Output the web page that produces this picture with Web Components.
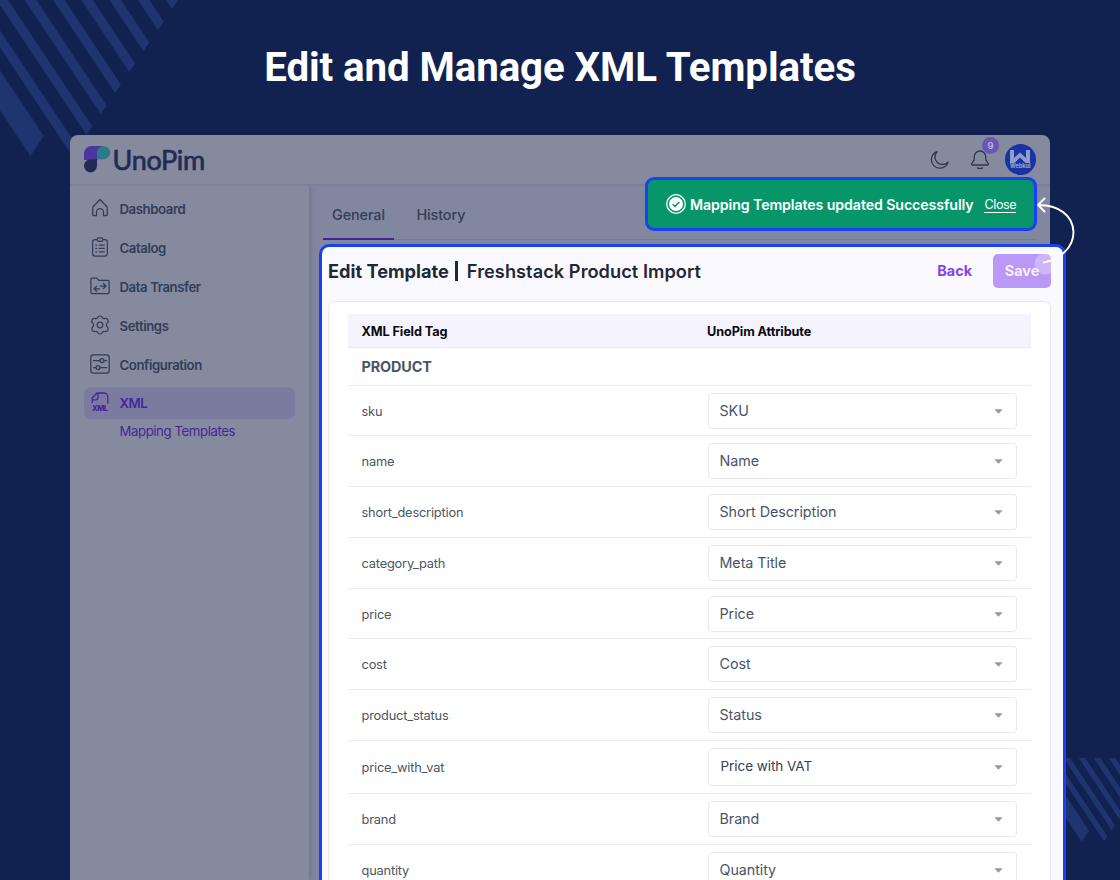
<!DOCTYPE html>
<html lang="en">
<head>
<meta charset="utf-8">
<title>Edit and Manage XML Templates</title>
<style>
    html, body {
        margin: 0;
        height: 880px;
        overflow: hidden;
        background: #112150;
        font-family: Inter, "Liberation Sans", sans-serif;
    }
</style>
</head>
<body>
<promo-page heading="Edit and Manage XML Templates">
    <app-window slot="window"></app-window>
    <edit-panel slot="overlay"></edit-panel>
    <success-toast slot="overlay">Mapping Templates updated Successfully</success-toast>
    <click-arrow slot="overlay"></click-arrow>
</promo-page>

<script>
const ICONS = {
    home: '<path d="M2.700 9.200 10 1.500l7.300 7.700v7.600a.9.9 0 0 1-.9.9h-2.900v-3.500a3.500 3.500 0 0 0-7 0v3.500H3.600a.9.9 0 0 1-.9-.9z"/>',
    catalog: '<path d="M7 2.6H5a2.4 2.4 0 0 0-2.4 2.4v11.6A2.4 2.4 0 0 0 5 19h10a2.4 2.4 0 0 0 2.4-2.4V5A2.4 2.4 0 0 0 15 2.6h-2"/><path d="M8 .9h4l1 1.7-1 1.7H8L7 2.6zM9.3 8h5M9.3 11.4h5M9.3 14.8h5M5.8 8h1M5.8 11.4h1M5.8 14.8h1"/>',
    transfer: '<path d="M.9 16.5V3.4A1.2 1.2 0 0 1 2.1 2.2h4.6l2 2.2h9.2a1.2 1.2 0 0 1 1.2 1.2v10.9a1.2 1.2 0 0 1-1.2 1.2H2.1a1.2 1.2 0 0 1-1.2-1.2z"/><path d="M9.5 12.8H4m2.6-2.5L4 12.8l2.6 2.5M10.2 10H16m-2.6-2.5L16 10l-2.6 2.5"/>',
    settings: '<path d="M7.6 2.6Q8.200 1 10 1t2.400 1.600q.9 1.400 2.400.9 2.200-.4 3 1.300 1 1.700-.3 3.100-1.200 1.100-1.200 2.100t1.200 2.100q1.300 1.400.3 3.100-.8 1.700-3 1.300-1.500-.5-2.400.9Q11.800 19 10 19t-2.400-1.600q-.9-1.400-2.400-.9-2.200.4-3-1.300-1-1.700.3-3.100Q3.700 11 3.700 10T2.500 7.900q-1.300-1.400-.3-3.100.8-1.700 3-1.300 1.500.5 2.400-.9z"/><circle cx="10" cy="10" r="2.800"/>',
    config: '<rect x=".8" y=".8" width="18.4" height="18.4" rx="2.6"/><circle cx="12" cy="6.5" r="2"/><circle cx="8" cy="13.5" r="2"/><path d="M3.5 6.5H10M14 6.5h2.6M3.5 13.5H6M10 13.5h6.6"/>'
};

function navIcon(name) {
    return `<svg viewBox="0 0 20 20" width="20" height="20" fill="none" stroke="currentColor" stroke-width="1.25" stroke-linecap="round" stroke-linejoin="round">${ICONS[name]}</svg>`;
}

/* Diagonal stripe decoration, one polygon per stripe */
function stripes(count, x, y, w, h, stepX, stepY) {
    let out = '';
    for (let i = 0; i < count; i++) {
        const ax = x + stepX * i, ay = y - stepY * i;
        out += `<polygon points="${ax},${ay} ${ax + w},${ay - h} ${ax + w - 140},${ay - h - 210} ${ax - 140},${ay - 210}"/>`;
    }
    return out;
}

class PromoPage extends HTMLElement {
    connectedCallback() {
        this.attachShadow({ mode: 'open' });
        this.shadowRoot.innerHTML = `
            <style>
                :host {
                    display: block;
                    position: relative;
                    height: 880px;
                    overflow: hidden;
                }

                svg {
                    position: absolute;
                    fill: #20356f;
                }

                .top { left: 0; top: 0; }
                .bottom { right: 0; top: 758px; }

                main {
                    position: relative;
                    display: flex;
                    flex-direction: column;
                    align-items: center;
                }

                h1 {
                    margin: 0;
                    height: 135px;
                    font: 700 40.3px/135px Roboto, sans-serif;
                    letter-spacing: -0.1px;
                    color: #fff;
                    white-space: nowrap;
                }
            </style>
            <svg class="top" width="240" height="190">
                <polygon points="30.5,156 43.8,136 -56,-14 -73.500,0"/>
                ${stripes(8, 72.3, 156, 5.8, 8.6, 14.25, 21)}
            </svg>
            <svg class="bottom" width="60" height="100" viewBox="1060 758 60 100">
                <polygon points="1081.7,841.7 1089,830.7 1030,742 1015,741.700"/>
                ${stripes(6, 1104, 841.3, 3.3, 5, 7.6, 11.2)}
            </svg>
            <main>
                <h1>${this.getAttribute('heading')}</h1>
                <slot name="window"></slot>
            </main>
            <slot name="overlay"></slot>
        `;
    }
}

class AppWindow extends HTMLElement {
    connectedCallback() {
        this.attachShadow({ mode: 'open' });
        this.shadowRoot.innerHTML = `
            <style>
                :host {
                    display: flex;
                    flex-direction: column;
                    width: 980px;
                    height: 745px;
                    border-radius: 8px 8px 0 0;
                    background: #858a9e;
                    overflow: hidden;
                }

                header {
                    display: flex;
                    align-items: center;
                    padding: 0 14px;
                    border-bottom: 2px solid #7b8298;
                    box-sizing: border-box;
                    height: 51px;
                }

                .actions {
                    display: flex;
                    align-items: center;
                    margin-left: auto;
                    color: #2c3854;
                }

                .bell {
                    position: relative;
                    display: flex;
                    margin: 0 13.5px 0 19px;
                }

                .badge {
                    position: absolute;
                    left: 13px;
                    top: -11.5px;
                    width: 17px;
                    height: 17px;
                    border-radius: 50%;
                    background: #6a57b4;
                    color: #b9b6d6;
                    font-size: 9.5px;
                    font-weight: 600;
                    line-height: 17px;
                    text-align: center;
                }

                .avatar {
                    display: flex;
                    flex-direction: column;
                    align-items: center;
                    width: 31.5px;
                    height: 31.5px;
                    border-radius: 50%;
                    background: #1734a4;
                    color: #949fca;
                    font-size: 5.5px;
                    font-weight: 800;
                    line-height: 7px;
                }

                .avatar svg { margin-top: 6px; }

                .body {
                    display: flex;
                    flex: 1;
                }

                side-nav { z-index: 1; }

                .main {
                    flex: 1;
                    background: #8287a0;
                    padding: 0 15px 0 14px;
                }

                .tabs {
                    display: flex;
                    height: 53px;
                    border-bottom: 1px solid #747a92;
                    font-size: 14.4px;
                    font-weight: 500;
                    letter-spacing: -0.1px;
                    color: #333e58;
                    line-height: 58px;
                }

                .tabs span {
                    box-sizing: border-box;
                    height: 54px;
                    padding: 0 9px;
                    margin-right: 13.5px;
                }

                .tabs .active { border-bottom: 2px solid #42249b; }
            </style>
            <header>
                <uno-logo></uno-logo>
                <div class="actions">
                    <svg width="20" height="20" viewBox="0 0 20 20" fill="none" stroke="currentColor" stroke-width="1.3" stroke-linejoin="round"><path d="M7 1.7A8.5 8.5 0 1 0 18.1 12.1 7.6 7.6 0 0 1 7 1.7z"/></svg>
                    <div class="bell">
                        <svg width="22" height="22" viewBox="0 0 22 22" fill="none" stroke="currentColor" stroke-width="1.3" stroke-linecap="round" stroke-linejoin="round"><path d="M11 2a5.8 5.8 0 0 0-5.8 5.8v3.1L2.7 14.5q-.5 1.5 1 1.5h14.6q1.5 0 1-1.5l-2.5-3.6V7.8A5.8 5.8 0 0 0 11 2zM8.5 18.9q2.5 1.4 5 0"/></svg>
                        <span class="badge">9</span>
                    </div>
                    <div class="avatar">
                        <svg width="20" height="13" viewBox="0 0 20 13" fill="#929cca"><path d="M0 0h4v8L10 2.500 16 8V0h4v13h-4.500L10 7.500 4.500 13H0z"/></svg>
                        Webkul
                    </div>
                </div>
            </header>
            <div class="body">
                <side-nav></side-nav>
                <div class="main">
                    <div class="tabs"><span class="active">General</span><span>History</span></div>
                </div>
            </div>
        `;
    }
}

class UnoLogo extends HTMLElement {
    connectedCallback() {
        this.attachShadow({ mode: 'open' });
        this.shadowRoot.innerHTML = `
            <style>
                :host {
                    display: flex;
                    align-items: center;
                    gap: 2.5px;
                    color: #232b54;
                }

                svg { display: block; }

                span {
                    padding-top: 1px;
                    font: 400 27px/30px Lato, sans-serif;
                    letter-spacing: -0.3px;
                    -webkit-text-stroke: 0.7px #232b54;
                }
            </style>
            <svg width="26" height="27" viewBox="0 0 26 27">
                <path d="M7.500 0H20v7L13 14H0V7.500A7.500 7.500 0 0 1 7.500 0z" fill="#4a369d"/>
                <path d="M19.500 0a6.500 6.500 0 1 1 0 13.200H13V6.600A6.500 6.500 0 0 1 19.500 0z" fill="#2b7a87"/>
                <path d="M6.500 13.200H13V20a6.500 6.500 0 1 1-13 0 6.600 6.600 0 0 1 6.500-6.800z" fill="#232b54"/>
            </svg>
            <span>UnoPim</span>
        `;
    }
}

class SideNav extends HTMLElement {
    connectedCallback() {
        const items = [['home', 'Dashboard'], ['catalog', 'Catalog'], ['transfer', 'Data Transfer'], ['settings', 'Settings'], ['config', 'Configuration']];
        this.attachShadow({ mode: 'open' });
        this.shadowRoot.innerHTML = `
            <style>
                :host {
                    display: flex;
                    flex-direction: column;
                    gap: 7px;
                    box-sizing: border-box;
                    width: 239px;
                    padding: 7px 14px 0 14px;
                    background: #858a9e;
                    box-shadow: 1px 0 6px #6a7089;
                    clip-path: inset(0 -8px 0 0);
                    color: #323d58;
                    font-size: 13.2px;
                    font-weight: 600;
                    letter-spacing: -0.41px;
                }

                .item {
                    display: flex;
                    align-items: center;
                    gap: 9.5px;
                    height: 32px;
                    padding-left: 6px;
                    border-radius: 7px;
                }

                .item svg {
                    position: relative;
                    top: -1px;
                    overflow: visible;
                }

                .active {
                    margin-top: -.6px;
                    background: #7a7b9f;
                    color: #43269c;
                }

                .sub {
                    margin-top: -7.5px;
                    padding-left: 35.5px;
                    color: #43269c;
                    font-weight: 400;
                    line-height: 24px;
                }
            </style>
            ${items.map(([icon, label]) => `<div class="item">${navIcon(icon)}<span>${label}</span></div>`).join('')}
            <div class="item active">
                <svg width="20" height="20" viewBox="0 0 20 20" fill="none" stroke="currentColor" stroke-width="1.3" stroke-linejoin="round">
                    <path d="M2.200 11V6L7 1h6.800a4 4 0 0 1 4 4v6.500M2.200 7.800h3.600a2.200 2.200 0 0 0 2.200-2.200V1"/>
                    <text x="2" y="19.400" font-size="7.600" font-weight="800" letter-spacing="0" fill="currentColor" stroke="none" textLength="16">XML</text>
                </svg>
                <span>XML</span>
            </div>
            <div class="sub">Mapping Templates</div>
        `;
    }
}

class SuccessToast extends HTMLElement {
    connectedCallback() {
        this.attachShadow({ mode: 'open' });
        this.shadowRoot.innerHTML = `
            <style>
                :host {
                    position: absolute;
                    left: 644.5px;
                    top: 177px;
                    box-sizing: border-box;
                    width: 392.5px;
                    height: 54px;
                    display: flex;
                    align-items: center;
                    padding: 0 0 0 18.5px;
                    border: 3px solid #1a40f5;
                    border-radius: 9px;
                    background: #07966a;
                    color: #fff;
                    white-space: nowrap;
                }

                .text {
                    margin-left: 4px;
                    font-size: 14.2px;
                    letter-spacing: -0.1px;
                    font-weight: 600;
                }

                a {
                    margin: 1px 0 0 11px;
                    font-size: 12.6px;
                    letter-spacing: -0.4px;
                    line-height: 15px;
                    border-bottom: 1px solid #fff;
                }
            </style>
            <svg width="20" height="20" viewBox="0 0 20 20"><circle cx="10" cy="10" r="9.300" fill="none" stroke="#fff" stroke-width="1.300"/><circle cx="10" cy="10" r="7" fill="#fff"/><path d="m6.700 10.200 2.300 2.200 4.400-4.400" fill="none" stroke="#07966a" stroke-width="1.500"/></svg>
            <span class="text"><slot></slot></span>
            <a>Close</a>
        `;
    }
}

class ClickArrow extends HTMLElement {
    connectedCallback() {
        this.attachShadow({ mode: 'open' });
        this.shadowRoot.innerHTML = `
            <style>
                :host {
                    position: absolute;
                    left: 1020px;
                    top: 190px;
                }

                svg { display: block; }
            </style>
            <svg width="60" height="90" viewBox="1020 190 60 90" fill="none" stroke="#fff" stroke-width="1.900" stroke-linecap="round" stroke-linejoin="round">
                <circle cx="1045" cy="264" r="10.500" fill="#fff" fill-opacity=".3" stroke="none"/>
                <path d="M1044 262.500C1060 259 1073.500 248 1073.500 232 1073 215 1058 205 1038.500 205M1044.500 198.500l-6.500 6.500 6.500 6.500"/>
            </svg>
        `;
    }
}

class EditPanel extends HTMLElement {
    connectedCallback() {
        // field, attribute, row height, select height
        const rows = [
            ['sku', 'SKU', 50, 36],
            ['name', 'Name', 51, 36],
            ['short_description', 'Short Description', 51, 36],
            ['category_path', 'Meta Title', 51, 36],
            ['price', 'Price', 50, 36],
            ['cost', 'Cost', 51, 36],
            ['product_status', 'Status', 51, 36],
            ['price_with_vat', 'Price with VAT', 53, 38],
            ['brand', 'Brand', 51, 36],
            ['quantity', 'Quantity', 51, 36]
        ];
        this.attachShadow({ mode: 'open' });
        this.shadowRoot.innerHTML = `
            <style>
                :host {
                    position: absolute;
                    left: 319px;
                    top: 243.5px;
                    box-sizing: border-box;
                    width: 747px;
                    height: 660px;
                    border: 3px solid #1a40f5;
                    border-radius: 10px;
                    background: #faf9ff;
                    padding: 0 12px 0 6px;
                }

                header {
                    display: flex;
                    align-items: center;
                    height: 48px;
                    margin-bottom: 6.5px;
                    color: #1f2937;
                    font-size: 18.2px;
                    font-weight: 700;
                    white-space: nowrap;
                }

                .bar {
                    width: 2.5px;
                    height: 20px;
                    margin: 0 9px 0 6.5px;
                    background: #1f2937;
                }

                .name {
                    font-weight: 600;
                    letter-spacing: 0.05px;
                }

                .back {
                    margin-left: auto;
                    margin-right: 21px;
                    font-size: 14.4px;
                    color: #8145ea;
                }

                .save {
                    width: 58px;
                    height: 34px;
                    border-radius: 5px;
                    background: #b998f6;
                    color: #f6f0ff;
                    font-size: 14.4px;
                    line-height: 34px;
                    text-align: center;
                }

                .card {
                    border: 1px solid #e7e7ee;
                    border-radius: 7px;
                    background: #fff;
                    padding: 12px 19px 0;
                }

                .head, .section {
                    display: grid;
                    grid-template-columns: 345.5px 1fr;
                    align-items: center;
                    height: 33px;
                    padding-left: 13.5px;
                    border-bottom: 1px solid #e9e9ee;
                    background: #f5f3ff;
                    color: #09090f;
                    font-size: 12.7px;
                    font-weight: 700;
                    letter-spacing: -0.1px;
                }

                .head span { padding-top: 1px; }

                .section {
                    height: 37px;
                    background: #fff;
                    color: #4b5563;
                    font-size: 14.4px;
                }
            </style>
            <header>
                <span>Edit Template</span><i class="bar"></i><span class="name">Freshstack Product Import</span>
                <span class="back">Back</span>
                <span class="save">Save</span>
            </header>
            <div class="card">
                <div class="head"><span>XML Field Tag</span><span>UnoPim Attribute</span></div>
                <div class="section">PRODUCT</div>
                ${rows.map(([field, attr, h, sh]) => `<mapping-row field="${field}" style="--row: ${h}px; --select: ${sh}px${field === 'price_with_vat' ? '; --text: 13.5px; --ink: #334155; --indent: 12px' : ''}">${attr}</mapping-row>`).join('')}
            </div>
        `;
    }
}

class MappingRow extends HTMLElement {
    connectedCallback() {
        this.attachShadow({ mode: 'open' });
        this.shadowRoot.innerHTML = `
            <style>
                :host {
                    display: grid;
                    grid-template-columns: 346px 309.5px;
                    box-sizing: border-box;
                    height: var(--row);
                    padding: 7px 0 0 13.5px;
                    border-bottom: 1px solid #e9e9eb;
                }

                .field {
                    line-height: calc(var(--select) + 2px);
                    font-size: 12.8px;
                    letter-spacing: -0.18px;
                    color: #4b5563;
                }

                .select {
                    display: flex;
                    align-items: center;
                    justify-content: space-between;
                    box-sizing: border-box;
                    height: var(--select);
                    padding: 0 13.5px 0 var(--indent, 11px);
                    border: 1px solid #e8e8ec;
                    border-radius: 4px;
                    color: var(--ink, #475569);
                    font-size: var(--text, 14.3px);
                    letter-spacing: -0.05px;
                }

                .value { padding-bottom: 2px; }
            </style>
            <span class="field">${this.getAttribute('field')}</span>
            <div class="select">
                <span class="value"><slot></slot></span>
                <svg width="9" height="5" viewBox="0 0 9 5"><path d="M.3.300h8.400L4.500 4.700z" fill="#999"/></svg>
            </div>
        `;
    }
}

customElements.define('uno-logo', UnoLogo);
customElements.define('side-nav', SideNav);
customElements.define('app-window', AppWindow);
customElements.define('success-toast', SuccessToast);
customElements.define('click-arrow', ClickArrow);
customElements.define('mapping-row', MappingRow);
customElements.define('edit-panel', EditPanel);
customElements.define('promo-page', PromoPage);
</script>
</body>
</html>
